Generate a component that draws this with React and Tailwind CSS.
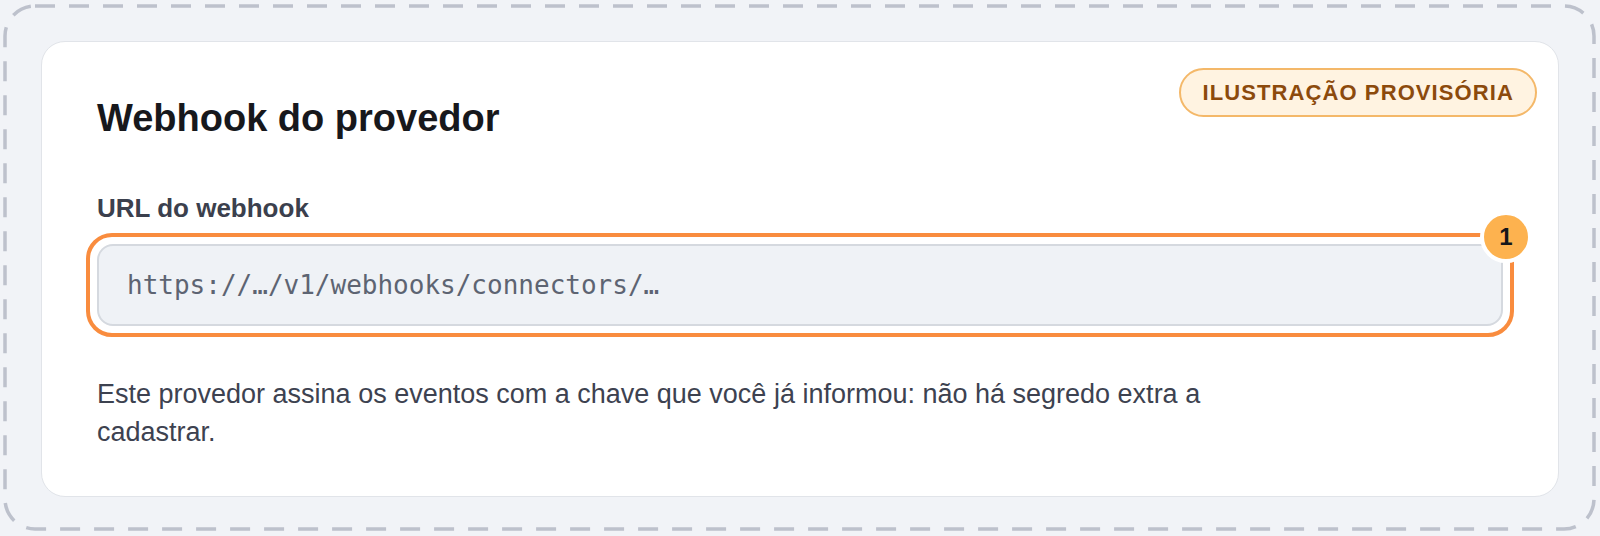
function DashedFrame() {
  return (
    <svg className="absolute inset-0 pointer-events-none" width="1600" height="536" viewBox="0 0 1600 536">
      <rect
        x="5"
        y="6"
        width="1589"
        height="523"
        rx="30"
        fill="none"
        stroke="#bdc1cc"
        strokeWidth="3.5"
        strokeDasharray="20 14"
      />
    </svg>
  );
}

function WebhookField() {
  return (
    <div className="relative">
      {/* orange highlight ring */}
      <div className="absolute -inset-[11px] rounded-[26px] border-[4px] border-[#f98c3e] pointer-events-none"></div>

      <div className="h-[82px] flex items-center rounded-[16px] border-2 border-[#d5d9df] bg-[#eff2f6] px-[28px]">
        <span className="text-[26px] text-[#5d6472] font-['DejaVu_Sans_Mono',monospace]">
          https://…/v1/webhooks/connectors/…
        </span>
      </div>

      {/* step marker */}
      <div className="absolute -top-[33px] -right-[29px] w-[52px] h-[52px] rounded-full border-[4px] border-white bg-[#fdb24f] flex items-center justify-center">
        <span className="text-[24px] font-bold text-[#15161a] leading-none">1</span>
      </div>
    </div>
  );
}

export default function App() {
  return (
    <div className="relative w-[1600px] h-[536px] bg-[#f1f3f7] p-[41px] font-['Liberation_Sans',Arial,sans-serif]">
      <DashedFrame />

      <div className="relative flex flex-col bg-white rounded-[24px] border border-[#e1e4e9] px-[55px] pt-[54px] pb-[45px]">
        <div className="absolute top-[26px] right-[21px] h-[49px] flex items-center rounded-full border-2 border-[#f4b869] bg-[#fff3e1] px-[21px]">
          <span className="text-[22px] font-bold tracking-[0.05em] text-[#8c4a0c]">ILUSTRAÇÃO PROVISÓRIA</span>
        </div>

        <h2 className="text-[38px] leading-[44px] font-bold text-[#17181c]">Webhook do provedor</h2>

        <label className="mt-[48px] mb-[16px] text-[26px] leading-[40px] font-semibold text-[#3b404d]">
          URL do webhook
        </label>

        <WebhookField />

        <p className="mt-[49px] max-w-[1180px] text-[27px] leading-[38px] text-[#3d4250]">
          Este provedor assina os eventos com a chave que você já informou: não há segredo extra a cadastrar.
        </p>
      </div>
    </div>
  );
}
